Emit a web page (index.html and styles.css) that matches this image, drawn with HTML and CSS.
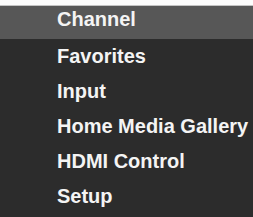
FILE: index.html
```html
<!DOCTYPE html>
<html lang="en">
<head>
  <meta charset="UTF-8" />
  <title>Menu</title>
  <link rel="stylesheet" href="styles.css">
</head>
<body>
  <div class="tope"></div>
  <ul class="menu">
    <li class="item activo">Channel</li>
    <li class="item">Favorites</li>
    <li class="item">Input</li>
    <li class="item">Home Media Gallery</li>
    <li class="item">HDMI Control</li>
    <li class="item">Setup</li>
  </ul>
</body>
</html>
```

FILE: styles.css
```css
* { box-sizing: border-box; margin: 0; padding: 0; }
body {
  font-family: 'Liberation Sans', Arial, sans-serif;
  background: #2c2c2c;
  color: #f4f4f4;
  height: 217px;
  overflow: hidden;
}
.tope {
  height: 6px; background: #fdfdfd;
  border-bottom: 1px solid #c4c4c4;
}
.menu { list-style: none; }
.item {
  height: 35px; line-height: 34px;
  padding-left: 57px; font-size: 20px; font-weight: bold;
  white-space: nowrap;
}
.activo { height: 33px; line-height: 26px; background: #575757; }
```
